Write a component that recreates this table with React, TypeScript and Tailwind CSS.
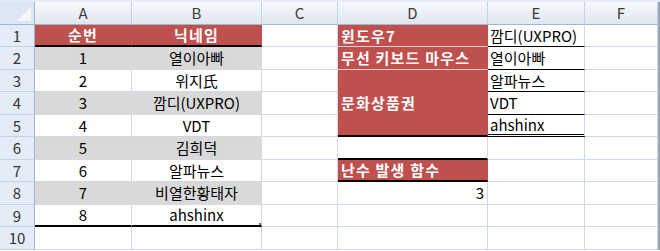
import React from 'react';

type CellProps = {
  className?: string;
  children?: React.ReactNode;
};

const grid = 'border-r border-b border-[#d0d7e5]';

function Cell({ className = '', children }: CellProps) {
  return (
    <div className={`flex items-center overflow-hidden whitespace-nowrap pt-[1px] ${className}`}>
      {children}
    </div>
  );
}

const columns = ['A', 'B', 'C', 'D', 'E', 'F'];

const red = 'bg-[#c0504d] text-white font-bold tracking-[1.2px]';
const grayCell = 'bg-[#d9d9d9] border-r border-b border-[#d9d9d9] justify-center';

const people = [
  { no: '1', name: '열이아빠' },
  { no: '2', name: '위지氏' },
  { no: '3', name: '깜디(UXPRO)' },
  { no: '4', name: 'VDT' },
  { no: '5', name: '김희덕' },
  { no: '6', name: '알파뉴스' },
  { no: '7', name: '비열한황태자' },
  { no: '8', name: 'ahshinx' },
];

function RowHeader({ n }: { n: number }) {
  return (
    <Cell className="justify-center bg-[#e4ecf7] border-r border-b border-r-[#9eb6ce] border-b-[#c5d3e6] text-[#333]">
      {n}
    </Cell>
  );
}

export default function App() {
  return (
    <div
      className="w-[660px] h-[251px] overflow-hidden bg-white text-[15px] text-black"
      style={{ fontFamily: '"Noto Sans CJK KR", "Noto Sans", sans-serif' }}
    >
      <div className="h-[2px] bg-[#e4ecf7]" />
      <div className="relative grid grid-cols-[35px_97px_130px_76px_150px_97px_73px_2px] grid-rows-[23px_22px_23px_22px_23px_22px_23px_22px_23px_22px_23px]">
        {/* corner */}
        <div className="relative bg-[#dde7f4] border-r border-b border-[#9eb6ce]">
          <div className="absolute right-[3px] bottom-[3px] w-0 h-0 border-l-[14px] border-l-transparent border-b-[14px] border-b-[#f4f7fb]" />
        </div>
        {columns.map((c) => (
          <Cell
            key={c}
            className="justify-center bg-gradient-to-b from-[#f9fbfd] to-[#dfe6ef] border-r border-b border-r-[#c5d3e6] border-b-[#9eb6ce] text-[#3b3b3b]"
          >
            {c}
          </Cell>
        ))}
        <div className="bg-[#9aa6b5]" />

        {/* row 1 */}
        <RowHeader n={1} />
        <Cell className={`${red} justify-center border-r border-[#c0504d] border-b-2 border-b-black`}>순번</Cell>
        <Cell className={`${red} justify-center border-r border-[#c0504d] border-b-2 border-b-black`}>닉네임</Cell>
        <Cell className={grid} />
        <Cell className={`${red} pl-[3px] border-r border-r-[#c0504d] border-b border-b-[#ecd0cf]`}>윈도우7</Cell>
        <Cell className={`${grid} pl-[2px] border-b-black`}>깜디(UXPRO)</Cell>
        <Cell className={grid} />
        <div className="bg-[#9aa6b5]" />

        {/* row 2 */}
        <RowHeader n={2} />
        <Cell className={grayCell}>{people[0].no}</Cell>
        <Cell className={grayCell}>{people[0].name}</Cell>
        <Cell className={grid} />
        <Cell className={`${red} pl-[3px] border-r border-r-[#c0504d] border-b border-b-[#ecd0cf]`}>무선 키보드 마우스</Cell>
        <Cell className={`${grid} pl-[2px] border-b-black`}>열이아빠</Cell>
        <Cell className={grid} />
        <div className="bg-[#9aa6b5]" />

        {/* row 3 */}
        <RowHeader n={3} />
        <Cell className={`${grid} justify-center`}>{people[1].no}</Cell>
        <Cell className={`${grid} justify-center`}>{people[1].name}</Cell>
        <Cell className={grid} />
        <Cell className={`${red} row-span-3 pl-[3px] border-r border-r-[#c0504d] border-b-2 border-b-black`}>
          문화상품권
        </Cell>
        <Cell className={`${grid} pl-[2px] border-b-black`}>알파뉴스</Cell>
        <Cell className={grid} />
        <div className="bg-[#9aa6b5]" />

        {/* row 4 */}
        <RowHeader n={4} />
        <Cell className={grayCell}>{people[2].no}</Cell>
        <Cell className={grayCell}>{people[2].name}</Cell>
        <Cell className={grid} />
        <Cell className={`${grid} pl-[2px] border-b-black`}>VDT</Cell>
        <Cell className={grid} />
        <div className="bg-[#9aa6b5]" />

        {/* row 5 */}
        <RowHeader n={5} />
        <Cell className={`${grid} justify-center`}>{people[3].no}</Cell>
        <Cell className={`${grid} justify-center`}>{people[3].name}</Cell>
        <Cell className={grid} />
        <Cell className="border-r border-r-[#d0d7e5] border-b-[3px] border-b-black border-double pl-[2px]">ahshinx</Cell>
        <Cell className={grid} />
        <div className="bg-[#9aa6b5]" />

        {/* row 6 */}
        <RowHeader n={6} />
        <Cell className={grayCell}>{people[4].no}</Cell>
        <Cell className={grayCell}>{people[4].name}</Cell>
        <Cell className={grid} />
        <Cell className={`${grid} border-b-2 border-b-black`} />
        <Cell className={grid} />
        <Cell className={grid} />
        <div className="bg-[#9aa6b5]" />

        {/* row 7 */}
        <RowHeader n={7} />
        <Cell className={`${grid} justify-center`}>{people[5].no}</Cell>
        <Cell className={`${grid} justify-center`}>{people[5].name}</Cell>
        <Cell className={grid} />
        <Cell className={`${red} pl-[3px] border-r border-r-[#c0504d] border-b-2 border-b-black`}>난수 발생 함수</Cell>
        <Cell className={grid} />
        <Cell className={grid} />
        <div className="bg-[#9aa6b5]" />

        {/* row 8 */}
        <RowHeader n={8} />
        <Cell className={grayCell}>{people[6].no}</Cell>
        <Cell className={grayCell}>{people[6].name}</Cell>
        <Cell className={grid} />
        <Cell className={`${grid} justify-end pr-[3px]`}>3</Cell>
        <Cell className={grid} />
        <Cell className={grid} />
        <div className="bg-[#9aa6b5]" />

        {/* row 9 */}
        <RowHeader n={9} />
        <Cell className={`${grid} justify-center border-b-2 border-b-black`}>{people[7].no}</Cell>
        <Cell className={`relative ${grid} justify-center border-b-2 border-b-black`}>
          {people[7].name}
          <span className="absolute right-[-3px] bottom-[-3px] w-[5px] h-[5px] bg-[#5a5fa0]" />
        </Cell>
        <Cell className={grid} />
        <Cell className={grid} />
        <Cell className={grid} />
        <Cell className={grid} />
        <div className="bg-[#9aa6b5]" />

        {/* row 10 */}
        <RowHeader n={10} />
        <Cell className={grid} />
        <Cell className={grid} />
        <Cell className={grid} />
        <Cell className={grid} />
        <Cell className={grid} />
        <Cell className={grid} />
        <div className="bg-[#9aa6b5]" />
      </div>
    </div>
  );
}
